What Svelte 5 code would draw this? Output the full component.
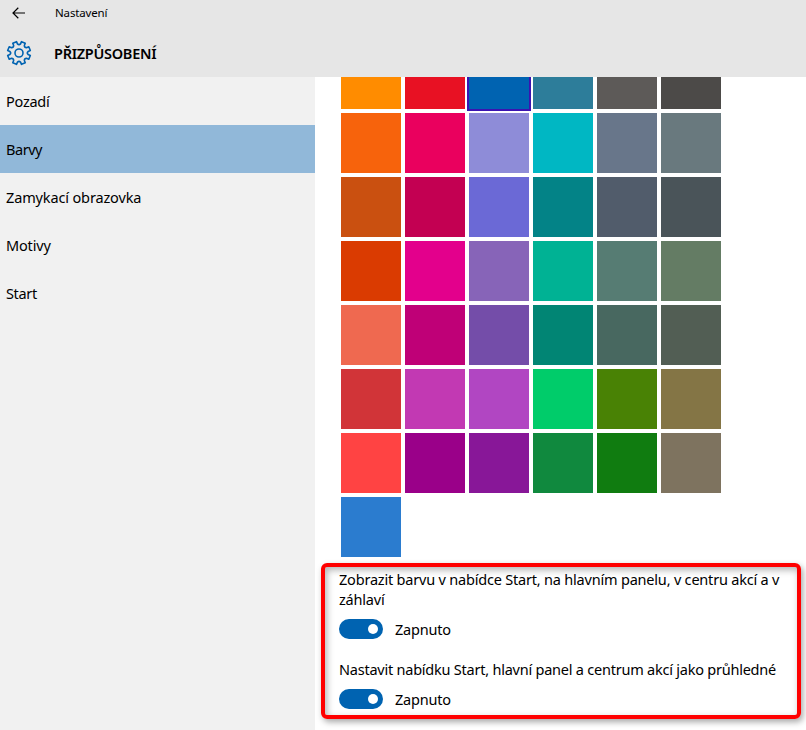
<script>
  const nav = [
    { label: 'Pozadí', spacing: -0.25 },
    { label: 'Barvy', spacing: -0.45 },
    { label: 'Zamykací obrazovka', spacing: -0.14 },
    { label: 'Motivy', spacing: -0.15 },
    { label: 'Start', spacing: -0.35 }
  ];
  const active = 'Barvy';
  const colors = [
    '#ff8c00', '#e81123', '#0063b1', '#2d7d9a', '#5d5a58', '#4c4a48',
    '#f7630c', '#ea005e', '#8e8cd8', '#00b7c3', '#68768a', '#69797e',
    '#ca5010', '#c30052', '#6b69d6', '#038387', '#515c6b', '#4a5459',
    '#da3b01', '#e3008c', '#8764b8', '#00b294', '#567c73', '#647c64',
    '#ef6950', '#bf0077', '#744da9', '#018574', '#486860', '#525e54',
    '#d13438', '#c239b3', '#b146c2', '#00cc6a', '#498205', '#847545',
    '#ff4343', '#9a0089', '#881798', '#10893e', '#107c10', '#7e735f',
    '#2b7ccf'
  ];
  const selected = 2;

  const point = (r, deg) => {
    const a = (deg * Math.PI) / 180;
    return `${(13 + r * Math.cos(a)).toFixed(2)} ${(13 + r * Math.sin(a)).toFixed(2)}`;
  };
  let gear = '';
  for (let i = 0; i < 8; i++) {
    const c = i * 45 + 22.5;
    gear += `${i ? 'L' : 'M'}${point(9.2, c - 13)} L${point(11.6, c - 10)} L${point(11.6, c + 10)} L${point(9.2, c + 13)} Q${point(7.6, c + 22.5)} ${point(9.2, c + 32)} `;
  }
  gear += 'Z';
</script>

<div class="window">
  <header>
    <div class="titlebar">
      <svg class="back" width="14" height="12" viewBox="0 0 14 12"><path d="M1 6H13M6.3 .8L1 6l5.3 5.2" /></svg>
      <span>Nastavení</span>
    </div>
    <div class="heading">
      <svg class="gear" width="26" height="26" viewBox="0 0 26 26"><path d={gear} /><circle cx="13" cy="13" r="4" /></svg>
      <h1>PŘIZPŮSOBENÍ</h1>
    </div>
  </header>
  <div class="body">
    <nav>
      {#each nav as item}
        <div class="item" class:active={item.label === active}><span style="letter-spacing:{item.spacing}px">{item.label}</span></div>
      {/each}
    </nav>
    <main>
      <div class="swatches">
        {#each colors as color, i}
          <div class="swatch" class:selected={i === selected} style="background:{color}"></div>
        {/each}
      </div>
      <section>
        <p><span class="first">Zobrazit barvu v nabídce Start, na hlavním panelu, v centru akcí a v</span><br /><span class="rest">záhlaví</span></p>
        <div class="switch"><i></i><span>Zapnuto</span></div>
        <p class="second"><span>Nastavit nabídku Start, hlavní panel a centrum akcí jako průhledné</span></p>
        <div class="switch"><i></i><span>Zapnuto</span></div>
      </section>
    </main>
  </div>
</div>

<style>
  .window {
    width: 806px;
    height: 730px;
    overflow: hidden;
    display: flex;
    flex-direction: column;
    background: #fff;
    color: #000;
    font: 400 14.5px/20px 'Noto Sans', 'Open Sans', sans-serif;
    white-space: nowrap;
  }
  header { height: 77px; flex: none; background: #e6e6e6; }
  .titlebar { height: 26px; display: flex; align-items: center; padding-left: 12px; gap: 29px; font-size: 11.5px; letter-spacing: -0.15px; }
  svg { fill: none; flex: none; }
  .back { stroke: #000; stroke-width: 1.2; }
  .heading { height: 54px; display: flex; align-items: center; padding-left: 6px; gap: 22px; }
  .gear { stroke: #0063b1; stroke-width: 1.6; stroke-linejoin: round; }
  h1 { margin: 0; font-size: 14.5px; font-weight: 600; letter-spacing: -0.28px; }
  .body { flex: 1; display: flex; min-height: 0; }
  nav { width: 315px; flex: none; background: #f1f1f1; }
  .item { height: 48px; padding-left: 6px; display: flex; align-items: center; }
  .active { background: #91b8d9; }
  main { flex: 1; min-width: 0; }
  .swatches { height: 480px; margin-left: 26px; display: grid; grid-template-columns: repeat(6, 60px); grid-template-rows: 32px repeat(7, 60px); gap: 4px; }
  .selected { box-shadow: 0 0 0 2px #3b13b0; clip-path: inset(0 -2px -2px); }
  section {
    box-sizing: border-box;
    width: 480px;
    height: 156px;
    margin: 6px 0 0 6px;
    padding: 2px 14px 0;
    border: 4px solid #f00;
    border-radius: 6px;
    box-shadow: 2px 3px 6px rgba(0, 0, 0, .35), inset 2px 3px 7px rgba(0, 0, 0, .3);
  }
  p { margin: 0; }
  .first { letter-spacing: -0.2px; }
  .rest { letter-spacing: -0.2px; }
  .second { margin-top: 20px; letter-spacing: -0.23px; }
  .switch { height: 20px; margin-top: 10px; display: flex; align-items: center; gap: 12px; letter-spacing: -0.2px; }
  i { box-sizing: border-box; width: 44px; height: 20px; padding: 5px; border-radius: 10px; background: #0063b1; display: flex; justify-content: flex-end; }
  i::after { content: ''; width: 10px; height: 10px; border-radius: 50%; background: #fff; }
</style>
